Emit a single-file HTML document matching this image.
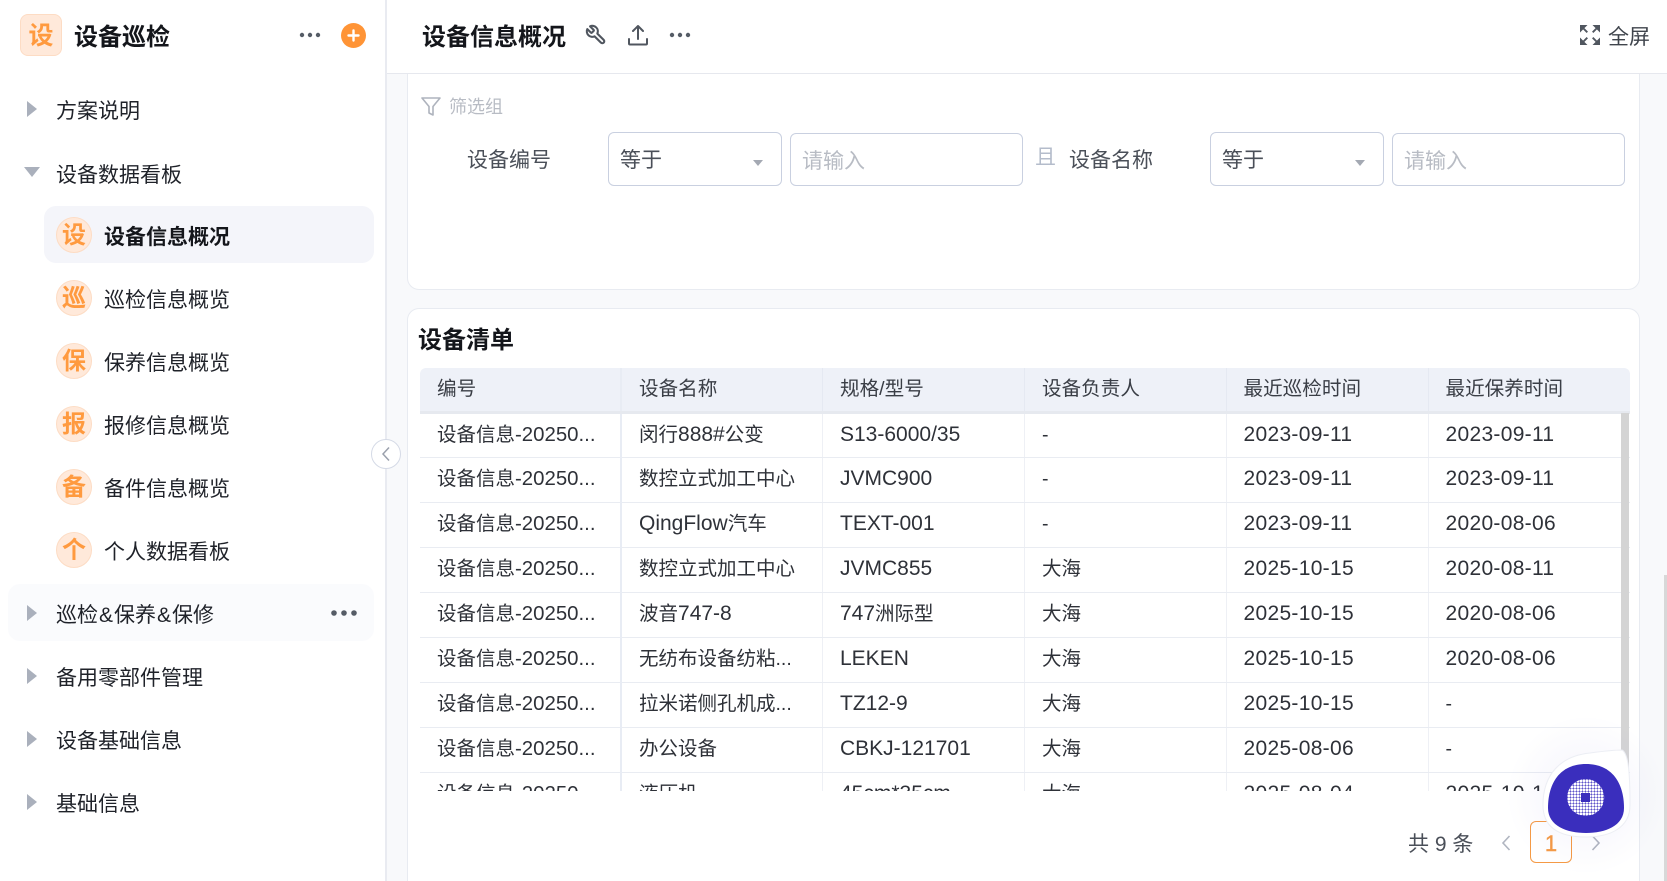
<!DOCTYPE html>
<html lang="zh"><head><meta charset="utf-8"><title>设备信息概况</title>
<style>
*{box-sizing:border-box}
html,body{margin:0;padding:0;width:1667px;height:881px;overflow:hidden}
body{position:relative;background:#fff;font-family:"Liberation Sans","Noto Sans CJK SC",sans-serif;color:#1f2229}
#wrap{position:absolute;left:0;top:0;width:1667px;height:881px;overflow:hidden}
.t{position:absolute;line-height:30px;white-space:nowrap;font-size:21px}
.abs{position:absolute}
.ic{position:absolute;width:36px;height:36px;left:56px;border-radius:50%;background:#ffe9da;border:1px solid #fddcc4;color:#ff9a3f;font-weight:700;font-size:24px;line-height:36px;text-align:center}
.tri{position:absolute;left:27px;width:0;height:0;border-left:10px solid #aab0bc;border-top:8px solid transparent;border-bottom:8px solid transparent}
.box{position:absolute;background:#fff;border:1px solid #c9d0e0;border-radius:6px}
.car{position:absolute;width:0;height:0;border-top:6px solid #a4a9b3;border-left:5px solid transparent;border-right:5px solid transparent}
table{border-collapse:collapse;table-layout:fixed;width:1210px;font-size:19.5px;color:#2e3138}
td,th{height:45px;line-height:24px;padding:0 0 1px 17px;font-weight:400;text-align:left;white-space:nowrap;overflow:hidden;border-right:1px solid #eef0f5;border-bottom:1px solid #e9ecf2}
th{height:44px;background:#eef1f8;border-right:1px solid #e5e9f2;border-bottom:3px solid #e6e9ef;color:#3a3e46;font-size:19.6px;padding-bottom:0}
td:first-child,th:first-child{border-right:2px solid #e8ecf4}
td:last-child,th:last-child{border-right:none}
i{font-style:normal;font-size:21px}
i.n{font-size:20.4px}
td:nth-child(n+5) i{letter-spacing:.3px}
.amp{margin:0 1px}
</style></head><body><div id="wrap">

<!-- main background -->
<div class="abs" style="left:386px;top:0;width:1281px;height:881px;background:#f8f9fb"></div>
<div class="abs" style="left:385px;top:0;width:2px;height:881px;background:#e9ebf1"></div>

<!-- filter card -->
<div class="abs" style="left:407px;top:50px;width:1233px;height:240px;background:#fff;border:1px solid #e8ebf1;border-radius:12px"></div>
<!-- table card -->
<div class="abs" style="left:407px;top:308px;width:1233px;height:573px;background:#fff;border:1px solid #e8ebf1;border-bottom:none;border-radius:12px 12px 0 0"></div>

<!-- header -->
<div class="abs" style="left:387px;top:0;width:1280px;height:74px;background:#fff;border-bottom:1px solid #e6e8ee"></div>
<div class="t" style="left:422px;top:21px;font-size:24px;font-weight:700;color:#14161b;margin-top:2px">设备信息概况</div>
<svg class="abs" style="left:585px;top:24px" width="22" height="22" viewBox="0 0 24 24" fill="none" stroke="#50565f" stroke-width="2.3" stroke-linejoin="round"><g transform="translate(24,0) scale(-1,1)"><path d="M14.7 6.3a1 1 0 0 0 0 1.4l1.6 1.6a1 1 0 0 0 1.4 0l3.77-3.77a6 6 0 0 1-7.94 7.94l-6.91 6.91a2.12 2.12 0 0 1-3-3l6.91-6.91a6 6 0 0 1 7.94-7.94l-3.76 3.76z"/></g></svg>
<svg class="abs" style="left:628px;top:24px" width="20" height="22" viewBox="0 0 20 22" fill="none" stroke="#50565f" stroke-width="2" stroke-linecap="round" stroke-linejoin="round"><path d="M10 15V2M5 7l5-5 5 5M1 15v4.5a1 1 0 0 0 1 1h16a1 1 0 0 0 1-1V15"/></svg>
<svg class="abs" style="left:669px;top:31px" width="22" height="8" viewBox="0 0 22 8" fill="#555c66"><circle cx="3" cy="4" r="2.2"/><circle cx="11" cy="4" r="2.2"/><circle cx="19" cy="4" r="2.2"/></svg>
<svg class="abs" style="left:1580px;top:25px" width="20" height="20" viewBox="0 0 20 20" fill="#50565f" stroke="#50565f"><g stroke="none"><path d="M0 0h7.5L0 7.5zM20 0h-7.5L20 7.5zM0 20h7.5L0 12.5zM20 20h-7.5L20 12.5z"/></g><path stroke-width="1.9" d="M3 3l4.3 4.3M17 3l-4.3 4.3M3 17l4.3-4.3M17 17l-4.3-4.3"/></svg>
<div class="t" style="left:1608px;top:23px;color:#3f444c">全屏</div>

<!-- sidebar -->
<div class="abs" style="left:0;top:0;width:385px;height:881px;background:#fff"></div>
<div class="abs" style="left:20px;top:14px;width:42px;height:42px;border-radius:8px;background:#ffe9da;border:1px solid #fddcc4;color:#ff9a3f;font-weight:700;font-size:25px;line-height:42px;text-align:center">设</div>
<div class="t" style="left:74px;top:23px;font-size:24px;font-weight:700;color:#14161b">设备巡检</div>
<svg class="abs" style="left:299px;top:31px" width="22" height="8" viewBox="0 0 22 8" fill="#555c66"><circle cx="3" cy="4" r="2.2"/><circle cx="11" cy="4" r="2.2"/><circle cx="19" cy="4" r="2.2"/></svg>
<svg class="abs" style="left:341px;top:23px" width="25" height="25" viewBox="0 0 25 25"><circle cx="12.5" cy="12.5" r="12.5" fill="#ff9436"/><path d="M12.5 7.5v10M7.5 12.5h10" stroke="#fff" stroke-width="2.4" stroke-linecap="round"/></svg>

<div class="tri" style="top:101px"></div>
<div class="t" style="left:56px;top:97px">方案说明</div>
<div class="abs" style="left:24px;top:167px;width:0;height:0;border-top:10px solid #aab0bc;border-left:8px solid transparent;border-right:8px solid transparent"></div>
<div class="t" style="left:56px;top:161px">设备数据看板</div>

<div class="abs" style="left:44px;top:206px;width:330px;height:57px;border-radius:12px;background:#f4f5fa"></div>
<div class="ic" style="top:217px">设</div>
<div class="t" style="left:104px;top:223px;font-weight:700;color:#14161b">设备信息概况</div>
<div class="ic" style="top:280px">巡</div>
<div class="t" style="left:104px;top:286px">巡检信息概览</div>
<div class="ic" style="top:343px">保</div>
<div class="t" style="left:104px;top:349px">保养信息概览</div>
<div class="ic" style="top:406px">报</div>
<div class="t" style="left:104px;top:412px">报修信息概览</div>
<div class="ic" style="top:469px">备</div>
<div class="t" style="left:104px;top:475px">备件信息概览</div>
<div class="ic" style="top:532px">个</div>
<div class="t" style="left:104px;top:538px">个人数据看板</div>

<div class="abs" style="left:8px;top:584px;width:366px;height:57px;border-radius:12px;background:#fafbfd"></div>
<div class="tri" style="top:605px"></div>
<div class="t" style="left:56px;top:601px">巡检<span class="amp">&amp;</span>保养<span class="amp">&amp;</span>保修</div>
<svg class="abs" style="left:330px;top:609px" width="28" height="8" viewBox="0 0 28 8" fill="#555c66"><circle cx="4" cy="4" r="2.8"/><circle cx="14" cy="4" r="2.8"/><circle cx="24" cy="4" r="2.8"/></svg>
<div class="tri" style="top:668px"></div>
<div class="t" style="left:56px;top:664px">备用零部件管理</div>
<div class="tri" style="top:731px"></div>
<div class="t" style="left:56px;top:727px">设备基础信息</div>
<div class="tri" style="top:794px"></div>
<div class="t" style="left:56px;top:790px">基础信息</div>

<!-- collapse button -->
<div class="abs" style="left:371px;top:439px;width:30px;height:30px;border-radius:50%;background:#fff;border:1px solid #d5dae6"></div>
<svg class="abs" style="left:381px;top:446px" width="10" height="16" viewBox="0 0 10 16" fill="none" stroke="#9aa0ac" stroke-width="1.5"><path d="M8 1.5 2 8l6 6.5"/></svg>

<!-- filter content -->
<svg class="abs" style="left:421px;top:96px" width="20" height="21" viewBox="0 0 20 21" fill="none" stroke="#aeb3bd" stroke-width="1.6" stroke-linejoin="round"><path d="M1 2h18l-7 8.5V19l-4-2v-6.5z"/></svg>
<div class="t" style="left:449px;top:92px;font-size:18px;color:#b8bcc4">筛选组</div>
<div class="t" style="left:467px;top:146px;color:#4a4f58">设备编号</div>
<div class="box" style="left:608px;top:132px;width:174px;height:54px"></div>
<div class="t" style="left:620px;top:146px;color:#4a4f58">等于</div>
<div class="car" style="left:753px;top:160px"></div>
<div class="box" style="left:790px;top:133px;width:233px;height:53px"></div>
<div class="t" style="left:802px;top:147px;color:#b8bcc4">请输入</div>
<div class="t" style="left:1035px;top:143px;color:#b4bccb">且</div>
<div class="t" style="left:1069px;top:146px;color:#4a4f58">设备名称</div>
<div class="box" style="left:1210px;top:132px;width:174px;height:54px"></div>
<div class="t" style="left:1222px;top:146px;color:#4a4f58">等于</div>
<div class="car" style="left:1355px;top:160px"></div>
<div class="box" style="left:1392px;top:133px;width:233px;height:53px"></div>
<div class="t" style="left:1404px;top:147px;color:#b8bcc4">请输入</div>

<!-- table -->
<div class="t" style="left:418px;top:326px;font-size:24px;font-weight:700;color:#14161b">设备清单</div>
<div class="abs" style="left:420px;top:368px;width:1210px;height:423px;overflow:hidden;border-radius:6px 6px 0 0">
<table>
<colgroup><col style="width:201px"><col style="width:201.5px"><col style="width:202px"><col style="width:201.5px"><col style="width:202px"><col style="width:202px"></colgroup>
<tr><th>编号</th><th>设备名称</th><th>规格/型号</th><th>设备负责人</th><th>最近巡检时间</th><th>最近保养时间</th></tr>
<tr><td>设备信息<i class="n">-20250...</i></td><td>闵行<i>888#</i>公变</td><td><i>S13-6000/35</i></td><td>-</td><td><i>2023-09-11</i></td><td><i>2023-09-11</i></td></tr>
<tr><td>设备信息<i class="n">-20250...</i></td><td>数控立式加工中心</td><td><i>JVMC900</i></td><td>-</td><td><i>2023-09-11</i></td><td><i>2023-09-11</i></td></tr>
<tr><td>设备信息<i class="n">-20250...</i></td><td><i>QingFlow</i>汽车</td><td><i>TEXT-001</i></td><td>-</td><td><i>2023-09-11</i></td><td><i>2020-08-06</i></td></tr>
<tr><td>设备信息<i class="n">-20250...</i></td><td>数控立式加工中心</td><td><i>JVMC855</i></td><td>大海</td><td><i>2025-10-15</i></td><td><i>2020-08-11</i></td></tr>
<tr><td>设备信息<i class="n">-20250...</i></td><td>波音<i>747-8</i></td><td><i>747</i>洲际型</td><td>大海</td><td><i>2025-10-15</i></td><td><i>2020-08-06</i></td></tr>
<tr><td>设备信息<i class="n">-20250...</i></td><td>无纺布设备纺粘...</td><td><i>LEKEN</i></td><td>大海</td><td><i>2025-10-15</i></td><td><i>2020-08-06</i></td></tr>
<tr><td>设备信息<i class="n">-20250...</i></td><td>拉米诺侧孔机成...</td><td><i>TZ12-9</i></td><td>大海</td><td><i>2025-10-15</i></td><td>-</td></tr>
<tr><td>设备信息<i class="n">-20250...</i></td><td>办公设备</td><td><i>CBKJ-121701</i></td><td>大海</td><td><i>2025-08-06</i></td><td>-</td></tr>
<tr><td>设备信息<i class="n">-20250...</i></td><td>液压机</td><td><i>45cm*35cm</i></td><td>大海</td><td><i>2025-08-04</i></td><td><i>2025-10-15</i></td></tr>
</table>
</div>
<!-- table scrollbar -->
<div class="abs" style="left:1621px;top:413px;width:8px;height:378px;background:#d4d4d4"></div>
<!-- page scrollbar -->
<div class="abs" style="left:1664px;top:575px;width:3px;height:306px;background:#d8d8d8"></div>

<!-- pagination -->
<div class="t" style="left:1408px;top:830px;color:#4a4f58">共 9 条</div>
<svg class="abs" style="left:1501px;top:835px" width="10" height="16" viewBox="0 0 10 16" fill="none" stroke="#b0b5c0" stroke-width="1.6"><path d="M8.5 1 2 8l6.5 7"/></svg>
<div class="abs" style="left:1530px;top:821px;width:42px;height:42px;border:1px solid #f59a45;border-radius:6px;color:#f59a45;font-size:22px;line-height:44px;text-align:center;-webkit-text-stroke:.4px #f59a45">1</div>
<svg class="abs" style="left:1591px;top:835px" width="10" height="16" viewBox="0 0 10 16" fill="none" stroke="#b0b5c0" stroke-width="1.6"><path d="M1.5 1 8 8l-6.5 7"/></svg>

<!-- floating bot -->
<svg class="abs" style="left:1500px;top:710px;overflow:visible" width="167" height="171" viewBox="1500 710 167 171">
<defs>
<pattern id="d" x="1567.5" y="779.5" width="3" height="3" patternUnits="userSpaceOnUse"><rect width="2.6" height="2.6" rx=".6" fill="#fff"/></pattern>
<radialGradient id="g"><stop offset="0" stop-color="#3a2ebd" stop-opacity=".06"/><stop offset="1" stop-color="#3a2ebd" stop-opacity="0"/></radialGradient>
</defs>
<circle cx="1586" cy="795" r="80" fill="url(#g)"/>
<path d="M1622 750C1628 753 1630 770 1630 805C1630 828 1610 837 1586 837C1560 837 1543 828 1543 805C1543 775 1560 756 1590 753C1605 751 1615 750 1622 750Z" fill="#fff" stroke="#eceef4"/>
<path d="M1586 764C1612 764 1624 783 1624 808C1624 826 1605 833 1586 833C1567 833 1548 826 1548 808C1548 783 1560 764 1586 764Z" fill="#3a2ebd"/>
<circle cx="1585.7" cy="797.5" r="18.5" fill="url(#d)"/>
<rect x="1581" y="793" width="9" height="9" fill="#3a2ebd"/>
</svg>
</div></body></html>
